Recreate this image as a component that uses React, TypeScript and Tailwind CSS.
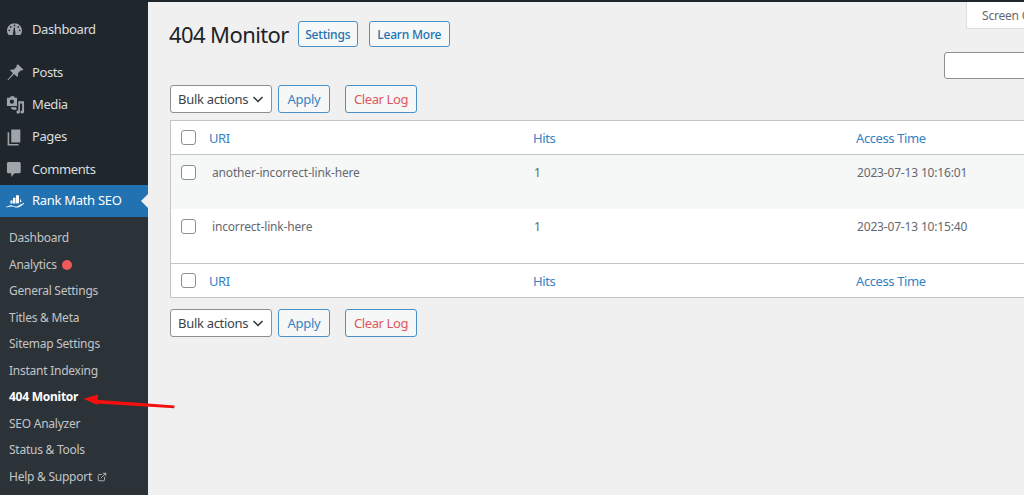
import { ExternalLink } from 'lucide-react';

const DashboardIcon = () => (
  <svg width="17" height="17" viewBox="0 0 20 20" fill="#a0a5aa">
    <path d="M10 2.600C5 2.600 1.200 6.500 1.200 11.200c0 2 .700 3.900 1.900 5.300h13.800c1.200-1.400 1.900-3.300 1.900-5.300 0-4.700-3.800-8.600-8.800-8.600z" />
    <circle cx="10" cy="5.200" r="1" fill="#1f272d" />
    <circle cx="5.600" cy="7" r="1" fill="#1f272d" />
    <circle cx="14.400" cy="7" r="1" fill="#1f272d" />
    <circle cx="3.800" cy="11" r="1" fill="#1f272d" />
    <circle cx="16.200" cy="11" r="1" fill="#1f272d" />
    <path d="M8.200 14.600 9.300 7.600h1.100l.7 7a1.600 1.600 0 1 1-2.900 0z" fill="#1f272d" />
  </svg>
);

const PinIcon = () => (
  <svg width="19" height="19" viewBox="0 0 20 20" fill="#a0a5aa">
    <path d="M12.600 1.400 18.400 7l-1.400 1-1.300-.500-3.200 3.200c.500 1.500.200 3-.700 4L8.600 11.600 2.200 18.200 1.400 18l6-7.200-3.300-3.100c1-1 2.600-1.200 4-.700l3.200-3.200-.400-1.300z" />
  </svg>
);

const MediaIcon = () => (
  <svg width="19" height="19" viewBox="0 0 20 20" fill="#a0a5aa">
    <path d="M1 3h3l1-1.600h3.400L9.400 3h2.200v8.600H1z" />
    <circle cx="6.200" cy="7" r="2.200" fill="#1f272d" />
    <path d="M13 6.600h6v11c0 1.100-1 1.800-2 1.800s-1.700-.700-1.700-1.600.800-1.600 1.700-1.600V9h-2.300v8.800c0 1-.900 1.700-2 1.700s-1.800-.700-1.800-1.600.800-1.600 1.800-1.600h.300z" />
    <path d="M5 13h6v2.600H8c-1.400 0-3-1-3-2.600z" />
  </svg>
);

const PagesIcon = () => (
  <svg width="19" height="19" viewBox="0 0 20 20" fill="#a0a5aa">
    <path d="M5.500 1.600h9.600v13.600H5.500z" />
    <path d="M3.400 4.400v12.400h9.800v1.700H1.700V4.400z" />
  </svg>
);

const CommentIcon = () => (
  <svg width="19" height="19" viewBox="0 0 20 20" fill="#a0a5aa">
    <path d="M2.500 2h11.500c.800 0 1.500.700 1.500 1.500v9c0 .800-.700 1.500-1.500 1.500H9l-3.500 4v-4H2.500c-.800 0-1.500-.700-1.500-1.500v-9C1 2.700 1.700 2 2.500 2z" />
  </svg>
);

const RankMathIcon = () => (
  <svg width="19" height="16" viewBox="0 0 19 16" fill="#fff">
    <path d="M0 14c2-1 4-2.500 6-1.500s4 1.500 6 .5 3-2 6-3v1c-2 .500-3 3-6 3.500s-4-1-6-1-4 .500-6 1z" />
    <path d="M4.500 7.500h2v3h-2zM7 4.800h2.500v5.700H7zM10 2.200h3v8l-3 .400z" />
    <path d="M14 5.500l1.500 3-1.500 1z" />
  </svg>
);

const menu = [
  { label: 'Posts', icon: <PinIcon /> },
  { label: 'Media', icon: <MediaIcon /> },
  { label: 'Pages', icon: <PagesIcon /> },
  { label: 'Comments', icon: <CommentIcon /> },
];

const submenu = ['Dashboard', 'Analytics', 'General Settings', 'Titles & Meta', 'Sitemap Settings', 'Instant Indexing', '404 Monitor', 'SEO Analyzer', 'Status & Tools', 'Help & Support'];

const Checkbox = () => <span className="block w-[15px] h-[15px] rounded-[3px] border border-[#8c8f94] bg-white" />;

const Toolbar = () => (
  <div className="flex items-center h-[28px]">
    <div className="w-[102px] h-[28px] ml-px flex items-center justify-between pl-[7px] pr-[7px] bg-white border border-[#8c8f94] rounded-[3px] text-[#3c434a] text-[13px] tracking-[-0.3px] whitespace-nowrap">
      <span className="pt-px">Bulk actions</span>
      <svg width="12" height="12" viewBox="0 0 12 12" fill="none" stroke="#2c3338" strokeWidth="1.500">
        <path d="M1.500 4 6 8.500 10.500 4" />
      </svg>
    </div>
    <button className="ml-[6px] w-[52px] h-[28px] pt-px border border-[#4a90c8] rounded-[3px] bg-[#f6f7f7] text-[#3582c4] text-[13px] tracking-[-0.3px]">Apply</button>
    <button className="ml-[15px] w-[72px] h-[28px] pt-px border border-[#4a90c8] rounded-[3px] bg-[#f6f7f7] text-[#e0565b] text-[13px] tracking-[-0.4px]">Clear Log</button>
  </div>
);

const HeadRow = ({ className }: { className: string }) => (
  <div className={`grid grid-cols-[38px_324px_323px_1fr] items-center h-[34px] text-[13px] tracking-[-0.4px] text-[#3582c4] ${className}`}>
    <div className="pl-[10px]"><Checkbox /></div>
    <div className="pt-[2px]">URI</div>
    <div className="pt-[2px]">Hits</div>
    <div className="pt-[2px]">Access Time</div>
  </div>
);

const DataRow = ({ uri, time, className }: { uri: string; time: string; className: string }) => (
  <div className={`grid grid-cols-[39px_323px_323px_1fr] h-[54px] pt-[9px] text-[12px] tracking-[-0.17px] leading-[18px] text-[#646970] ${className}`}>
    <div className="pl-[10px] pt-[1px]"><Checkbox /></div>
    <div className="pl-[2px]">{uri}</div>
    <div className="pl-px">1</div>
    <div className="pl-px">{time}</div>
  </div>
);

export default function App() {
  return (
    <div className="relative flex w-[1024px] h-[495px] overflow-hidden bg-[#f0f0f1] font-['Noto_Sans',sans-serif]">
      <aside className="w-[148px] shrink-0 bg-[#1f272d] pt-[13px] flex flex-col">
        <div className="flex items-center h-[33px] pl-[6px] text-[13px] tracking-[-0.4px] text-[#dcdcde]">
          <DashboardIcon />
          <span className="ml-[9px]">Dashboard</span>
        </div>
        <div className="h-[10px]" />
        {menu.map((item) => (
          <div key={item.label} className="flex items-center h-[32.300px] pl-[6px] pt-px text-[13px] tracking-[-0.4px] text-[#dcdcde]">
            {item.icon}
            <span className="ml-[7px]">{item.label}</span>
          </div>
        ))}
        <div className="relative flex items-center h-[32px] pl-[6px] bg-[#2271b1] text-[13px] tracking-[-0.3px] text-white">
          <RankMathIcon />
          <span className="ml-[7px]">Rank Math SEO</span>
          <span className="absolute right-0 top-[9px] w-0 h-0 border-y-[7px] border-y-transparent border-r-[7px] border-r-[#f0f0f1]" />
        </div>
        <div className="flex-1 bg-[#2c3338] pt-[8px]">
          {submenu.map((label) => (
            <div key={label} className={`flex items-center h-[26.500px] pl-[9px] text-[12px] tracking-[-0.25px] ${label === '404 Monitor' ? 'font-bold text-white' : 'text-[#c3c4c7]'}`}>
              {label}
              {label === 'Analytics' && <span className="ml-[5px] w-[10px] h-[10px] rounded-full bg-[#f05a5a]" />}
              {label === 'Help & Support' && <ExternalLink className="ml-[5px]" size={10} strokeWidth={2} />}
            </div>
          ))}
        </div>
      </aside>

      <main className="flex-1 min-w-0 relative flex flex-col border-t-2 border-[#1f272d] overflow-hidden">
        <div className="absolute top-0 left-[818px] w-[70px] h-[27px] bg-white border border-t-0 border-[#dcdcde] rounded-b-[3px] pl-[15px] pt-[5px] text-[12px] tracking-[-0.2px] text-[#646970] whitespace-nowrap overflow-hidden">Screen Options</div>
        <div className="flex items-center h-[48px] pt-[16px] pl-[21px]">
          <h1 className="text-[22px] tracking-[-0.6px] leading-[30px] text-[#1d2327]">404 Monitor</h1>
          <button className="ml-[9px] w-[60px] h-[26px] pt-px border border-[#4a90c8] rounded-[3px] bg-[#f6f7f7] text-[#2271b1] text-[12px] tracking-[-0.2px] font-medium">Settings</button>
          <button className="ml-[11px] w-[81px] h-[26px] pt-px border border-[#4a90c8] rounded-[3px] bg-[#f6f7f7] text-[#2271b1] text-[12px] tracking-[-0.2px] font-medium">Learn More</button>
        </div>
        <div className="flex justify-end mt-[2px] h-[27px] -mr-[20px]">
          <div className="w-[100px] h-[27px] bg-white border border-[#8c8f94] rounded-[3px]" />
        </div>
        <div className="pl-[21px] mt-[6px]">
          <Toolbar />
        </div>
        <div className="ml-[22px] mt-[7px] -mr-[20px] bg-white border border-[#c3c4c7]">
          <HeadRow className="border-b border-[#c3c4c7]" />
          <DataRow uri="another-incorrect-link-here" time="2023-07-13 10:16:01" className="bg-[#f6f7f7]" />
          <DataRow uri="incorrect-link-here" time="2023-07-13 10:15:40" className="bg-white" />
          <HeadRow className="border-t border-[#c3c4c7]" />
        </div>
        <div className="pl-[21px] mt-[11px]">
          <Toolbar />
        </div>
      </main>

      <svg className="absolute left-[82px] top-[392px]" width="94" height="18" viewBox="0 0 94 18" fill="#f50f0f">
        <path d="M92.500 13.500 14 7.800 14.300 11.600 92.300 16.300z" />
        <path d="M1.500 6.800 16 2.500 15.500 13z" />
      </svg>
    </div>
  );
}
